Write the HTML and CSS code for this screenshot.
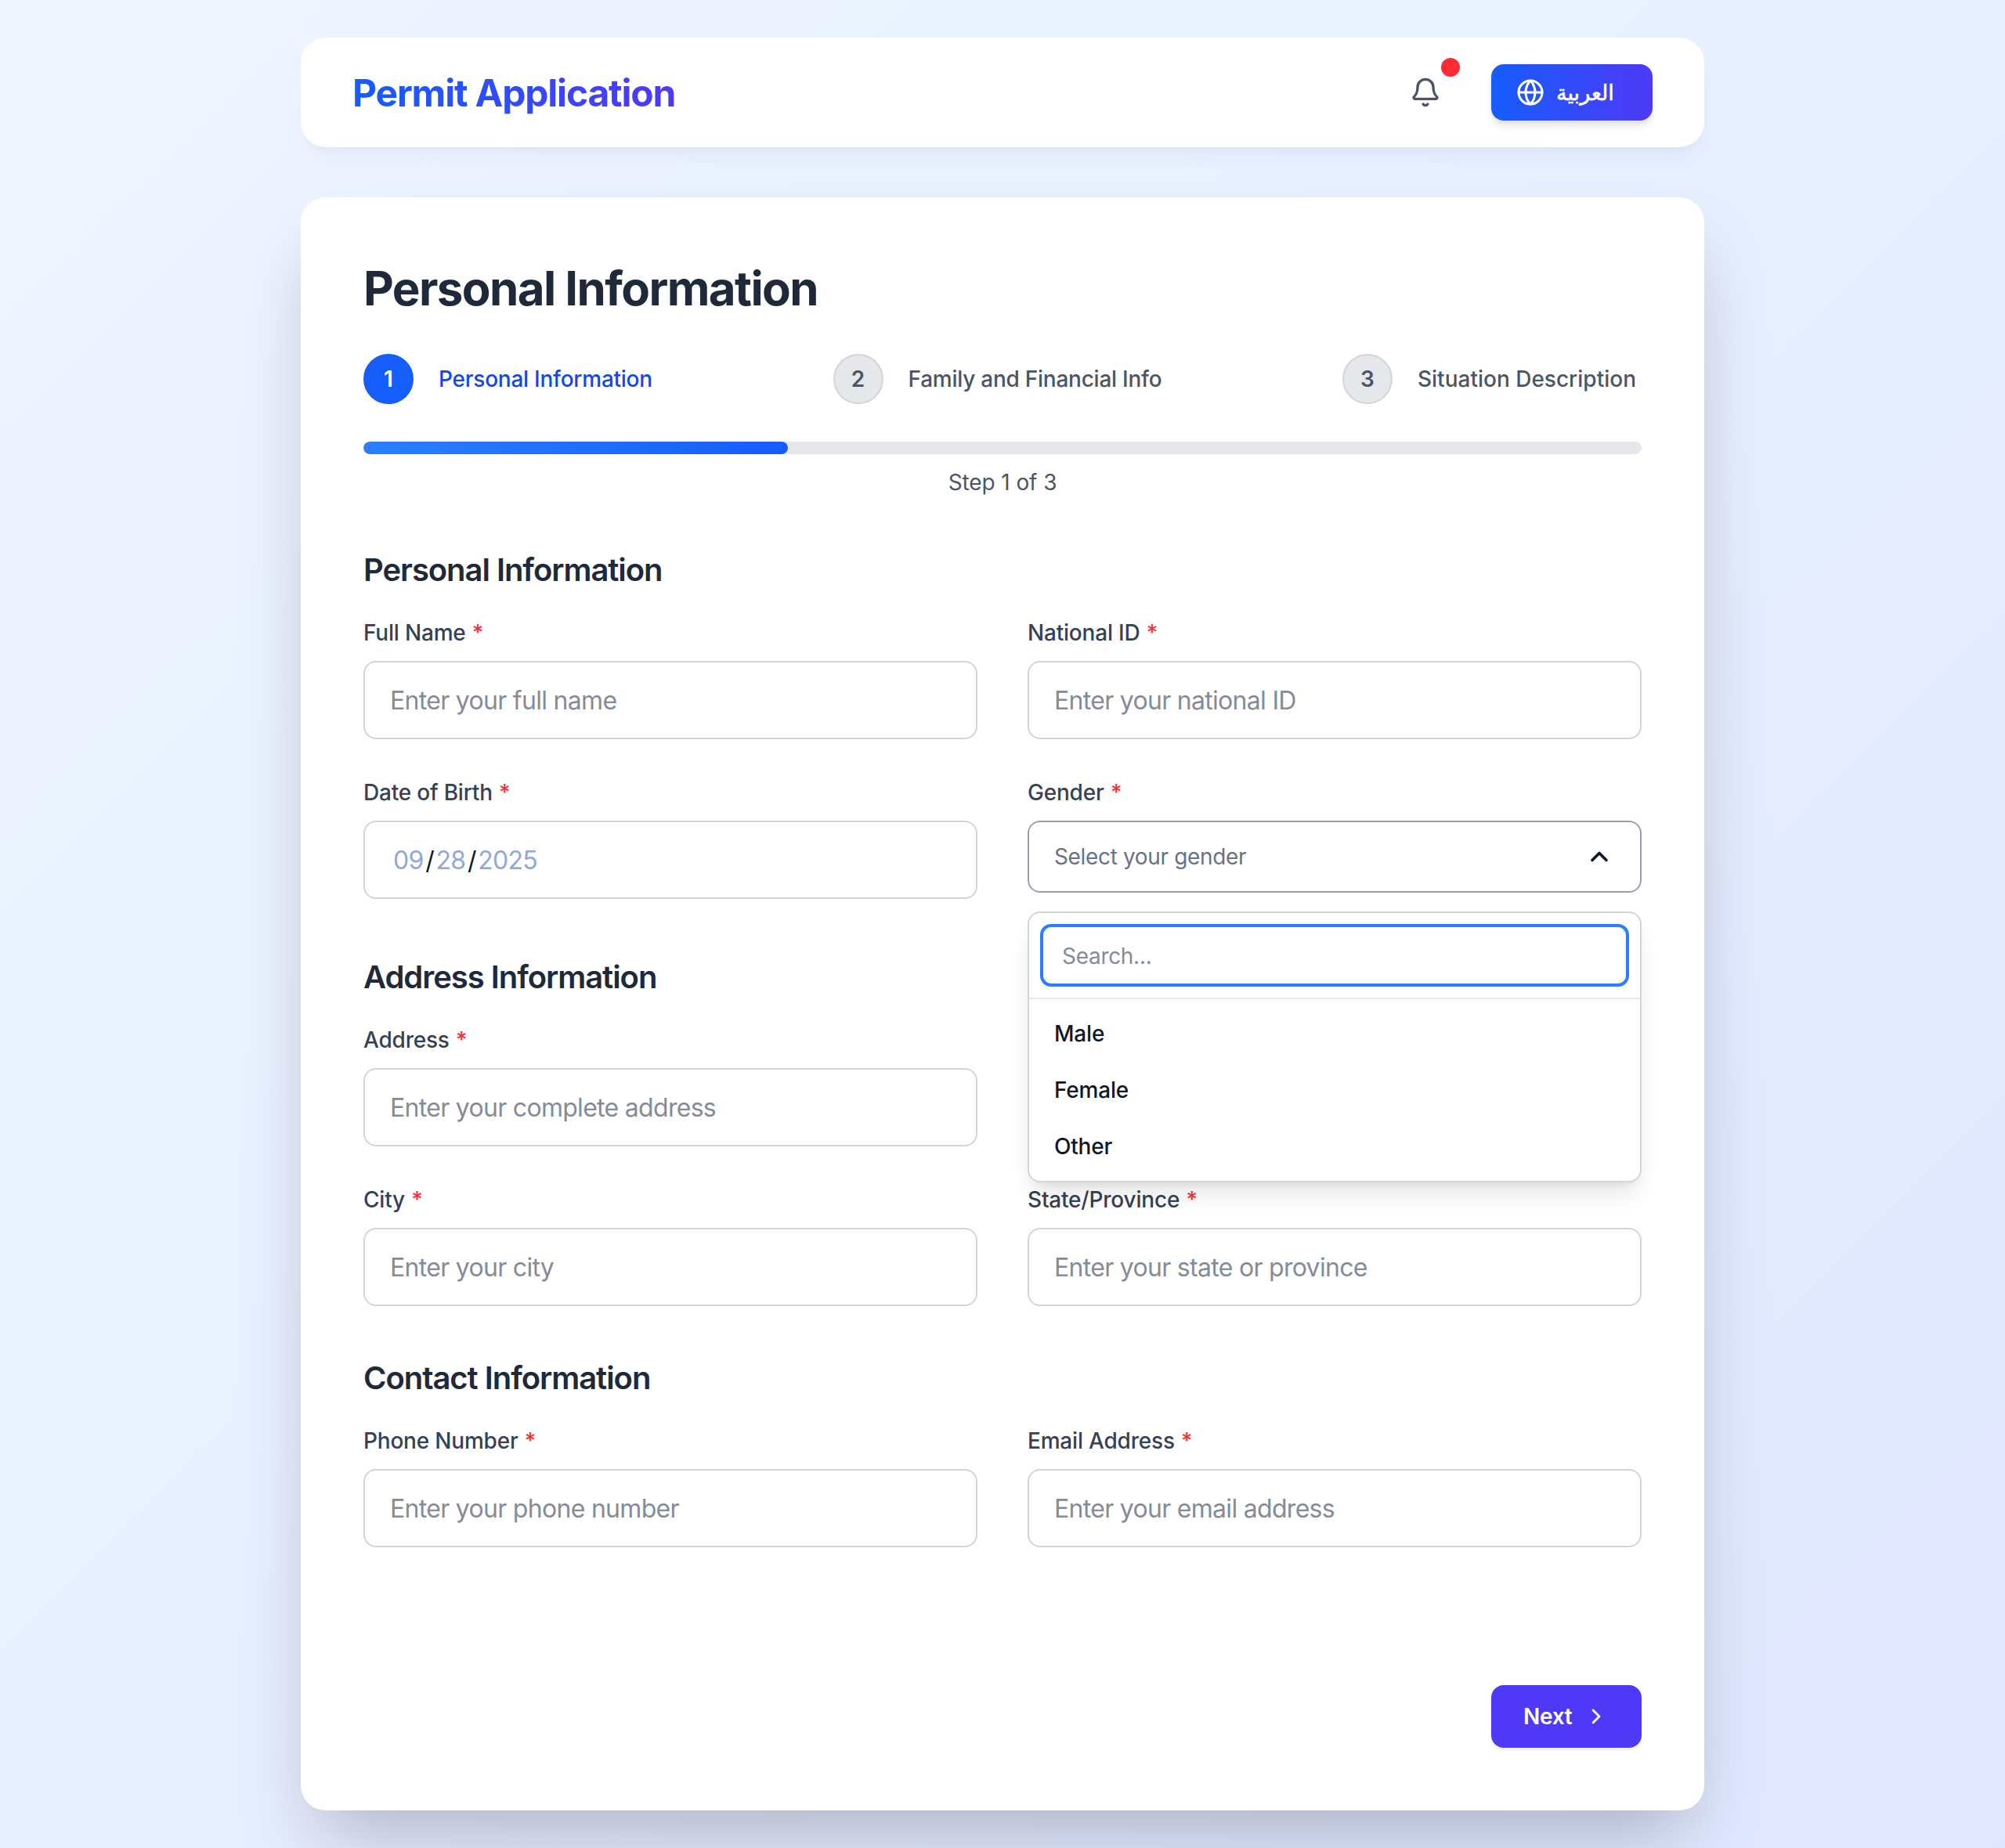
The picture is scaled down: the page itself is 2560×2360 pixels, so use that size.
FILE: index.html
```html
<!DOCTYPE html>
<html lang="en">
<head>
    <meta charset="UTF-8">
    <meta name="viewport" content="width=device-width, initial-scale=1.0">
    <title>Permit Application</title>
    <link rel="stylesheet" href="styles.css">
</head>
<body>
<div class="page">
    <header class="topbar">
        <h1 class="brand">Permit Application</h1>
        <div class="topbar-actions">
            <button type="button" class="bell">
                <svg viewBox="0 0 24 24" width="40" height="40" fill="none" stroke="#4a5565" stroke-width="2" stroke-linecap="round" stroke-linejoin="round"><path d="M10.268 21a2 2 0 0 0 3.464 0"/><path d="M3.262 15.326A1 1 0 0 0 4 17h16a1 1 0 0 0 .74-1.673C19.41 13.956 18 12.499 18 8A6 6 0 0 0 6 8c0 4.499-1.411 5.956-2.738 7.326"/></svg>
                <span class="bell-dot"></span>
            </button>
            <button type="button" class="lang">
                <svg viewBox="0 0 24 24" width="36" height="36" fill="none" stroke="#fff" stroke-width="2" stroke-linecap="round" stroke-linejoin="round"><circle cx="12" cy="12" r="10"/><path d="M12 2a14.5 14.5 0 0 0 0 20 14.5 14.5 0 0 0 0-20"/><path d="M2 12h20"/></svg>
                <span class="lang-text" lang="ar" dir="rtl">العربية</span>
            </button>
        </div>
    </header>

    <main class="card">
        <h2 class="card-title">Personal Information</h2>

        <div class="steps">
            <div class="step active"><span class="step-num">1</span><span class="step-label">Personal Information</span></div>
            <div class="step"><span class="step-num">2</span><span class="step-label">Family and Financial Info</span></div>
            <div class="step"><span class="step-num">3</span><span class="step-label">Situation Description</span></div>
        </div>

        <div class="progress"><div class="progress-fill"></div></div>
        <p class="progress-text">Step 1 of 3</p>

        <form>
            <section class="section">
                <h3 class="section-title">Personal Information</h3>
                <div class="form-grid">
                    <div class="field">
                        <label for="fullName">Full Name <span class="req">*</span></label>
                        <input type="text" id="fullName" placeholder="Enter your full name">
                    </div>
                    <div class="field">
                        <label for="nationalId">National ID <span class="req">*</span></label>
                        <input type="text" id="nationalId" placeholder="Enter your national ID">
                    </div>
                    <div class="field">
                        <label>Date of Birth <span class="req">*</span></label>
                        <div class="date-input"><span>09</span><i>/</i><span>28</span><i>/</i><span>2025</span></div>
                    </div>
                    <div class="field">
                        <label>Gender <span class="req">*</span></label>
                        <div class="select-wrap">
                            <button type="button" class="select-btn">
                                <span>Select your gender</span>
                                <svg viewBox="0 0 24 24" width="36" height="36" fill="none" stroke="#101828" stroke-width="2.4" stroke-linecap="round" stroke-linejoin="round"><path d="m18 15-6-6-6 6"/></svg>
                            </button>
                            <div class="dropdown">
                                <div class="dropdown-search"><input type="text" placeholder="Search..."></div>
                                <ul class="dropdown-list">
                                    <li>Male</li>
                                    <li>Female</li>
                                    <li>Other</li>
                                </ul>
                            </div>
                        </div>
                    </div>
                </div>
            </section>

            <section class="section">
                <h3 class="section-title">Address Information</h3>
                <div class="form-grid">
                    <div class="field">
                        <label for="address">Address <span class="req">*</span></label>
                        <input type="text" id="address" placeholder="Enter your complete address">
                    </div>
                    <div class="field"></div>
                    <div class="field">
                        <label for="city">City <span class="req">*</span></label>
                        <input type="text" id="city" placeholder="Enter your city">
                    </div>
                    <div class="field">
                        <label for="state">State/Province <span class="req">*</span></label>
                        <input type="text" id="state" placeholder="Enter your state or province">
                    </div>
                </div>
            </section>

            <section class="section">
                <h3 class="section-title">Contact Information</h3>
                <div class="form-grid">
                    <div class="field">
                        <label for="phone">Phone Number <span class="req">*</span></label>
                        <input type="text" id="phone" placeholder="Enter your phone number">
                    </div>
                    <div class="field">
                        <label for="email">Email Address <span class="req">*</span></label>
                        <input type="text" id="email" placeholder="Enter your email address">
                    </div>
                </div>
            </section>

            <div class="form-nav">
                <button type="button" class="next">
                    Next
                    <svg viewBox="0 0 24 24" width="32" height="32" fill="none" stroke="#fff" stroke-width="2" stroke-linecap="round" stroke-linejoin="round"><path d="m9 18 6-6-6-6"/></svg>
                </button>
            </div>
        </form>
    </main>
</div>
</body>
</html>
```

FILE: styles.css
```css
* {
    box-sizing: border-box;
}

body {
    margin: 0;
    min-height: 2360px;
    font-family: Inter, "Noto Sans", sans-serif;
    background: linear-gradient(135deg, #eff6ff, #e0e7ff);
    color: #1e2939;
}

button {
    font-family: inherit;
    border: none;
    background: none;
    cursor: pointer;
    padding: 0;
}

.page {
    width: 1792px;
    margin: 0 auto;
    padding: 48px 0;
}

/* top bar */
.topbar {
    height: 140px;
    background-color: #fff;
    border-radius: 32px;
    box-shadow: 0 20px 30px -6px rgba(0, 0, 0, 0.04), 0 8px 12px -8px rgba(0, 0, 0, 0.04);
    display: flex;
    align-items: center;
    justify-content: space-between;
    padding: 0 66px 0 66px;
    margin-bottom: 64px;
}

.brand {
    margin: 2px 0 0;
    font-size: 48px;
    line-height: 64px;
    font-weight: 700;
    letter-spacing: -1.2px;
    background: linear-gradient(to right, #155dfc, #4f39f6);
    -webkit-background-clip: text;
    background-clip: text;
    color: transparent;
}

.topbar-actions {
    display: flex;
    align-items: center;
    gap: 44px;
}

.bell {
    position: relative;
    width: 80px;
    height: 80px;
    display: flex;
    align-items: center;
    justify-content: center;
}

.bell-dot {
    position: absolute;
    top: -4px;
    right: -4px;
    width: 24px;
    height: 24px;
    border-radius: 50%;
    background-color: #fb2c36;
}

.lang {
    width: 206px;
    height: 72px;
    padding-left: 32px;
    border-radius: 16px;
    background: linear-gradient(to right, #155dfc, #4f39f6);
    color: #fff;
    display: flex;
    align-items: center;
    gap: 15px;
    box-shadow: 0 8px 12px -2px rgba(0, 0, 0, 0.1), 0 4px 8px -4px rgba(0, 0, 0, 0.1);
}

.lang-text {
    font-family: "DejaVu Sans", sans-serif;
    font-size: 27px;
    font-weight: 400;
    -webkit-text-stroke: 0.6px #fff;
}

/* main card */
.card {
    background-color: #fff;
    border-radius: 32px;
    padding: 80px;
    box-shadow: 0 50px 100px -24px rgba(0, 0, 0, 0.25);
}

.card-title {
    margin: 0 0 48px;
    font-size: 60px;
    line-height: 72px;
    font-weight: 700;
    letter-spacing: -1.6px;
    color: #1e2939;
}

.steps {
    display: flex;
    justify-content: space-between;
    padding-right: 7px;
    margin-bottom: 48px;
}

.step {
    display: flex;
    align-items: center;
    gap: 32px;
}

.step-num {
    width: 64px;
    height: 64px;
    border-radius: 50%;
    background-color: #e5e7eb;
    border: 2px solid #d1d5dc;
    color: #4a5565;
    font-size: 28px;
    font-weight: 600;
    display: flex;
    align-items: center;
    justify-content: center;
}

.step-label {
    font-size: 28px;
    line-height: 40px;
    font-weight: 500;
    letter-spacing: -0.25px;
    color: #4a5565;
}

.step:last-child .step-label {
    letter-spacing: 0;
}

.step.active .step-num {
    background-color: #155dfc;
    border-color: #155dfc;
    color: #fff;
}

.step.active .step-label {
    color: #1447e6;
}

.progress {
    height: 16px;
    border-radius: 8px;
    background-color: #e5e7eb;
    overflow: hidden;
}

.progress-fill {
    width: 33.2%;
    height: 100%;
    border-radius: 8px;
    background: linear-gradient(to right, #2b7fff, #155dfc);
}

.progress-text {
    margin: 16px 0 64px;
    text-align: center;
    font-size: 28px;
    line-height: 40px;
    letter-spacing: -0.1px;
    color: #4a5565;
}

/* form */
.section {
    margin-bottom: 64px;
}

.section-title {
    margin: 0 0 32px;
    font-size: 40px;
    line-height: 56px;
    font-weight: 600;
    letter-spacing: -1.05px;
    color: #1e2939;
}

.form-grid {
    display: grid;
    grid-template-columns: 1fr 1fr;
    gap: 48px 64px;
}

.field label {
    display: block;
    margin-bottom: 16px;
    font-size: 28px;
    line-height: 40px;
    font-weight: 500;
    letter-spacing: -0.2px;
    color: #364153;
}

.req {
    color: #fb2c36;
    margin-left: 1px;
}

.field > input,
.date-input {
    display: block;
    width: 100%;
    height: 100px;
    padding: 0 32px;
    border: 2px solid #d1d5dc;
    border-radius: 16px;
    background-color: #fff;
    font-family: inherit;
    font-size: 32px;
    letter-spacing: -0.7px;
    color: #101828;
}

input::placeholder {
    color: #858b97;
    opacity: 1;
}

.date-input {
    display: flex;
    align-items: center;
    padding-left: 36px;
    color: #101828;
}

.date-input span {
    color: #90a8d8;
}

.date-input i {
    font-style: normal;
    margin: 0 2.5px;
}

.select-wrap {
    position: relative;
    margin-bottom: 16px;
}

.select-btn {
    width: 100%;
    height: 92px;
    padding: 0 34px 0 32px;
    border: 2px solid #99a1af;
    border-radius: 16px;
    background-color: #fff;
    color: #6a7282;
    font-size: 28px;
    letter-spacing: -0.35px;
    display: flex;
    align-items: center;
    justify-content: space-between;
}

.dropdown {
    position: absolute;
    top: 116px;
    left: 0;
    right: 0;
    z-index: 10;
    background-color: #fff;
    border: 2px solid #d1d5dc;
    border-radius: 16px;
    box-shadow: 0 20px 30px -6px rgba(0, 0, 0, 0.1), 0 8px 12px -8px rgba(0, 0, 0, 0.1);
}

.dropdown-search {
    padding: 16px;
    border-bottom: 2px solid #e5e7eb;
}

.dropdown-search input {
    display: block;
    width: 100%;
    height: 76px;
    padding: 2px 24px 0;
    border: 2px solid #2b7fff;
    border-radius: 12px;
    box-shadow: 0 0 0 2px #2b7fff;
    outline: none;
    font-family: inherit;
    font-size: 28px;
    letter-spacing: -0.3px;
    color: #101828;
}

.dropdown-list {
    list-style: none;
    margin: 0;
    padding: 8px 0;
}

.dropdown-list li {
    height: 72px;
    padding: 0 32px;
    display: flex;
    align-items: center;
    font-size: 28px;
    font-weight: 500;
    letter-spacing: -0.2px;
    color: #101828;
}

.form-nav {
    display: flex;
    justify-content: flex-end;
    margin-top: 176px;
}

.next {
    width: 192px;
    height: 80px;
    padding-left: 41px;
    border-radius: 16px;
    background-color: #4f39f6;
    color: #fff;
    font-size: 28px;
    font-weight: 600;
    letter-spacing: -0.3px;
    display: flex;
    align-items: center;
    gap: 15px;
    box-shadow: 0 2px 4px rgba(0, 0, 0, 0.1);
}
```
